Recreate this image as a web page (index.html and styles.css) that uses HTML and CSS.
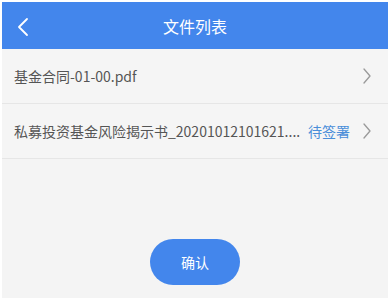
FILE: index.html
```html
<!DOCTYPE html>
<html lang="zh-CN">
<head>
    <meta charset="UTF-8">
    <meta name="viewport" content="width=device-width, initial-scale=1.0">
    <title>文件列表</title>
    <link rel="stylesheet" href="styles.css">
</head>
<body>

<div class="screen">
    <div class="header">
        <span class="back">
            <svg width="12" height="20" viewBox="0 0 12 20"><path d="M10 2 L2 10 L10 18" fill="none" stroke="#fff" stroke-width="1.8" stroke-linecap="round" stroke-linejoin="round"/></svg>
        </span>
        <h1>文件列表</h1>
    </div>

    <div class="file-list">
        <div class="file-row">
            <span class="name">基金合同-01-00.pdf</span>
            <span class="arrow">
                <svg width="10" height="18" viewBox="0 0 10 18"><path d="M2 2 L8 9 L2 16" fill="none" stroke="#9a9a9a" stroke-width="1.3" stroke-linecap="round" stroke-linejoin="round"/></svg>
            </span>
        </div>
        <div class="file-row">
            <span class="name">私募投资基金风险揭示书_20201012101621....</span>
            <span class="status">待签署</span>
            <span class="arrow">
                <svg width="10" height="18" viewBox="0 0 10 18"><path d="M2 2 L8 9 L2 16" fill="none" stroke="#9a9a9a" stroke-width="1.3" stroke-linecap="round" stroke-linejoin="round"/></svg>
            </span>
        </div>
    </div>

    <div class="actions">
        <button type="button">确认</button>
    </div>
</div>

</body>
</html>
```

FILE: styles.css
```css
body {
    margin: 0;
    background-color: #fff;
    font-family: "Noto Sans CJK SC", "Noto Sans", sans-serif;
}
.screen {
    margin: 2px 2px 0 2px;
    height: 296px;
    background-color: #f4f4f4;
    display: flex;
    flex-direction: column;
}
.header {
    height: 47px;
    background-color: #4386ec;
    display: flex;
    align-items: center;
    justify-content: center;
    position: relative;
}
.header h1 {
    margin: 0;
    font-size: 16px;
    font-weight: normal;
    color: #fff;
}
.back {
    position: absolute;
    left: 15px;
    top: 15px;
    display: flex;
}
.file-list {
    display: flex;
    flex-direction: column;
}
.file-row {
    height: 54px;
    display: flex;
    align-items: center;
    padding: 0 16px 0 12px;
    border-bottom: 1px solid #e6e6e6;
    background-color: #f5f5f5;
}
.name {
    flex: 1;
    font-size: 14px;
    color: #555;
    white-space: nowrap;
    overflow: hidden;
}
.status {
    font-size: 14px;
    color: #4a8ed9;
    margin: 0 12px 0 3px;
}
.arrow {
    display: flex;
}
.actions {
    flex: 1;
    display: flex;
    justify-content: center;
    align-items: flex-end;
    padding-bottom: 13px;
}
button {
    width: 90px;
    height: 46px;
    border: none;
    border-radius: 23px;
    background-color: #4386ec;
    color: #fff;
    font-family: "Noto Sans CJK SC", sans-serif;
    font-size: 14px;
}
```
